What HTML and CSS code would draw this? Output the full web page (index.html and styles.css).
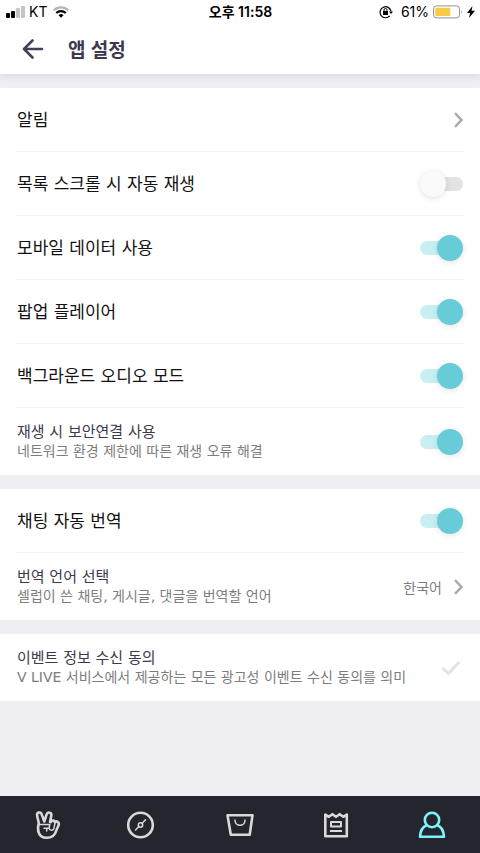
FILE: index.html
```html
<!DOCTYPE html>
<html lang="ko">
<head>
<meta charset="utf-8">
<meta name="viewport" content="width=device-width, initial-scale=1">
<title>앱 설정</title>
<link rel="stylesheet" href="styles.css">
</head>
<body>
<div class="app">
  <header class="top">
    <div class="status">
      <div class="status-side">
        <svg class="signal" width="19" height="12" viewBox="0 0 19 12" aria-hidden="true"><rect x="0" y="7" width="4" height="5" rx="1"/><rect x="5" y="5" width="4" height="7" rx="1"/><rect x="10" y="2" width="4" height="10" rx="1" fill="#c4c4c4"/><rect x="15" y="0" width="4" height="12" rx="1" fill="#c4c4c4"/></svg>
        <span class="carrier">KT</span>
        <svg width="16" height="12" viewBox="0 0 16 12" fill="none" stroke-width="2.2" aria-hidden="true"><path d="M.8 4.300a10.200 10.200 0 0 1 14.400 0" stroke="#b5b5b5"/><path d="M3.300 7a6.700 6.700 0 0 1 9.400 0" stroke="#000"/><path d="M8 11.800 5.500 9.300a3.600 3.600 0 0 1 5 0z" fill="#000"/></svg>
      </div>
      <time class="clock">오후 11:58</time>
      <div class="status-side status-end">
        <svg class="lock" width="14" height="14" viewBox="0 0 14 14" fill="none" stroke="#000" aria-hidden="true"><path d="M10.800 10.800A5.500 5.500 0 1 1 12 6.200" stroke-width="1.200"/><path d="M10 6.500h4l-2 2.500z" fill="#000" stroke="none"/><rect x="4" y="6" width="5" height="4" fill="#000" stroke="none"/><path d="M5 6.500V5a1.500 1.500 0 0 1 3 0v1.500"/></svg>
        <span>61%</span>
        <svg width="30" height="14" viewBox="0 0 30 14" aria-hidden="true"><rect x=".5" y=".9" width="26" height="12" rx="3" fill="none" stroke="#929292"/><rect x="2.300" y="2.700" width="15" height="8.400" rx="1" fill="#f7cb45"/><path d="M28 4.800q1.600 2.200 0 4.400z" fill="#929292"/></svg>
        <svg class="bolt" width="8" height="12" viewBox="0 0 8 12" aria-hidden="true"><path d="M5.500 0 0 7h3.200L2 12l6-7.300H4.500z"/></svg>
      </div>
    </div>
    <div class="titlebar">
      <button class="back" aria-label="뒤로"><svg width="22" height="20" viewBox="0 0 22 20" fill="none" stroke="#454257" stroke-width="2.600" stroke-linecap="round" stroke-linejoin="round"><path d="M20 10H2M10.500 1.500 2 10l8.500 8.500"/></svg></button>
      <h1>앱 설정</h1>
    </div>
  </header>
  <main>
    <section class="group">
      <a class="row" href="#alerts"><span class="name">알림</span><svg class="chevron" width="9" height="16" viewBox="0 0 9 16"><path d="m1 1.200 6.500 6.800L1 14.800"/></svg></a>
      <label class="row"><span class="name">목록 스크롤 시 자동 재생</span><input class="switch" type="checkbox"></label>
      <label class="row"><span class="name">모바일 데이터 사용</span><input class="switch" type="checkbox" checked></label>
      <label class="row"><span class="name">팝업 플레이어</span><input class="switch" type="checkbox" checked></label>
      <label class="row"><span class="name">백그라운드 오디오 모드</span><input class="switch" type="checkbox" checked></label>
      <label class="row detailed"><span class="copy"><span class="subname">재생 시 보안연결 사용</span><span class="hint">네트워크 환경 제한에 따른 재생 오류 해결</span></span><input class="switch" type="checkbox" checked></label>
    </section>
    <section class="group">
      <label class="row"><span class="name">채팅 자동 번역</span><input class="switch" type="checkbox" checked></label>
      <a class="row detailed" href="#language"><span class="copy"><span class="subname">번역 언어 선택</span><span class="hint">셀럽이 쓴 채팅, 게시글, 댓글을 번역할 언어</span></span><span class="value">한국어</span><svg class="chevron" width="9" height="16" viewBox="0 0 9 16"><path d="m1 1.200 6.500 6.800L1 14.800"/></svg></a>
    </section>
    <section class="group">
      <label class="row detailed"><span class="copy"><span class="subname">이벤트 정보 수신 동의</span><span class="hint">V LIVE 서비스에서 제공하는 모든 광고성 이벤트 수신 동의를 의미</span></span><input class="consent" type="checkbox"><svg class="tick" width="20" height="16" viewBox="0 0 20 16" aria-hidden="true"><path d="m1.500 8 6 5.500L18.500 1.800"/></svg></label>
    </section>
  </main>
  <nav class="tabs">
    <a href="#home" aria-label="홈"><svg width="40" height="57" viewBox="0 0 40 57"><path d="M10.800 27 9.200 20C8.300 16 12.800 15.300 13.800 18.600L16.300 25.500 18.500 18.600C19.600 15.300 24 16.300 23.300 19.800L22 26M10.800 27C9.200 33 9.500 41.800 18.700 41.800 25 41.800 27.500 38 28.500 34L30.500 29.500C31.800 26.500 28.500 24.200 26.800 26 26.500 23.800 23.300 24 22.800 26.200"/><path class="fine" d="M11.500 28.500h10.300L21 32.500M16 32.200h5.200M18.700 32.500V35M21 32.500c1 2.200 3.800 2.400 4.800.4L27 27"/></svg></a>
    <a href="#discover" aria-label="탐색"><svg width="40" height="57" viewBox="0 0 40 57"><circle cx="16.500" cy="29" r="12.300"/><circle class="fine" cx="16.500" cy="29" r="2.200"/><path class="fine" d="m18 27.500 3.500-3.800M15 30.500 11.500 34"/></svg></a>
    <a href="#store" aria-label="스토어"><svg width="40" height="57" viewBox="0 0 40 57"><path d="M7.500 19.300h25L29.700 38.700H10.800z"/><path class="fine" d="M15 24c0 7 10 7 10 0"/></svg></a>
    <a href="#feed" aria-label="피드"><svg width="40" height="57" viewBox="0 0 40 57"><path d="M9.300 18.500V40.300h21.500V18.500l-3.500 2.300-3.600-2.600-3.700 2.600-3.600-2.600-3.600 2.600z"/><path class="fine bold" d="M15 26h10v4.500H15zM14 35h12"/></svg></a>
    <a class="current" href="#profile" aria-label="내 정보" aria-current="page"><svg width="40" height="57" viewBox="0 0 40 57"><circle cx="20" cy="24" r="7.200"/><path d="M14.500 29.200C10.500 31 8.200 35.500 8 40.800h24c-.2-5.300-2.500-9.800-6.500-11.600"/></svg></a>
  </nav>
</div>
</body>
</html>
```
FILE: styles.css
```css
* { box-sizing: border-box; }
body {
  margin: 0;
  background: #efeef3;
  color: #111;
  font-family: "DejaVu Sans", "Noto Sans CJK KR", sans-serif;
  font-size: 14px;
}
a { color: inherit; text-decoration: none; }
svg { display: block; flex: none; }
.app { min-height: 100vh; display: flex; flex-direction: column; }
main { flex: 1; display: flex; flex-direction: column; gap: 14px; padding: 14px 0; }
.top { background: #fff; box-shadow: 0 1px 8px rgba(40, 40, 70, .14); }
.status {
  height: 24px;
  padding: 0 5px 0 6px;
  display: grid;
  grid-template-columns: 1fr auto 1fr;
  align-items: center;
  color: #000;
  font-family: Inter, "Noto Sans CJK KR", sans-serif;
  line-height: 24px;
}
.status-side { display: flex; align-items: center; gap: 4px; }
.status-end { justify-content: flex-end; }
.carrier { margin-right: 2px; }
.lock { margin-right: 4px; }
.clock { font-weight: 600; }
.titlebar { height: 50px; padding: 0 22px; display: flex; align-items: center; gap: 24px; }
.back { padding: 0; border: 0; background: none; }
h1 {
  margin: 0;
  font: 700 19px/28px "Noto Sans CJK KR", sans-serif;
  color: #3c394e;
}
.group { background: #fff; padding: 0 17px; }
.row { display: flex; align-items: center; height: 64px; border-bottom: 1px solid #f2f2f3; }
.row:last-child { border-bottom: 0; }
.detailed { height: 67px; }
.name { flex: 1; font-size: 17px; line-height: 26px; }
.copy { flex: 1; display: flex; flex-direction: column; line-height: 19px; }
.subname { font-size: 15px; color: #3c394e; }
.hint, .value { color: #7d7d7d; }
.value { margin-right: 12px; }
.chevron, .tick { fill: none; stroke: #aaa; stroke-width: 2.4; }
.tick { stroke: #e2e2e2; stroke-width: 3; margin-right: 2px; }
.consent { appearance: none; margin: 0; }
.consent:checked + .tick { stroke: #67ccd8; }
.switch {
  appearance: none;
  flex: none;
  display: flex;
  align-items: center;
  position: relative;
  width: 43px;
  height: 26px;
  margin: 0;
}
.switch::before {
  content: "";
  width: 43px;
  height: 14px;
  border-radius: 7px;
  background: #e3e3e3;
}
.switch::after {
  content: "";
  position: absolute;
  left: 0;
  width: 26px;
  height: 26px;
  border-radius: 50%;
  background: #fafafa;
  box-shadow: 0 1px 6px rgba(0, 0, 0, .12);
}
.switch:checked::before { background: #c9eff2; }
.switch:checked::after { left: auto; right: 0; background: #67ccd8; }
.tabs { display: grid; grid-template-columns: repeat(5, 1fr); justify-items: center; background: #25252d; color: #d9d9db; }
.tabs svg { fill: none; stroke: currentColor; stroke-width: 2.6; stroke-linejoin: round; stroke-linecap: round; }
.tabs .fine { stroke-width: 1.5; }
.tabs .bold { stroke-width: 2; stroke-linecap: butt; }
.tabs .current { color: #7df4fa; }
```
